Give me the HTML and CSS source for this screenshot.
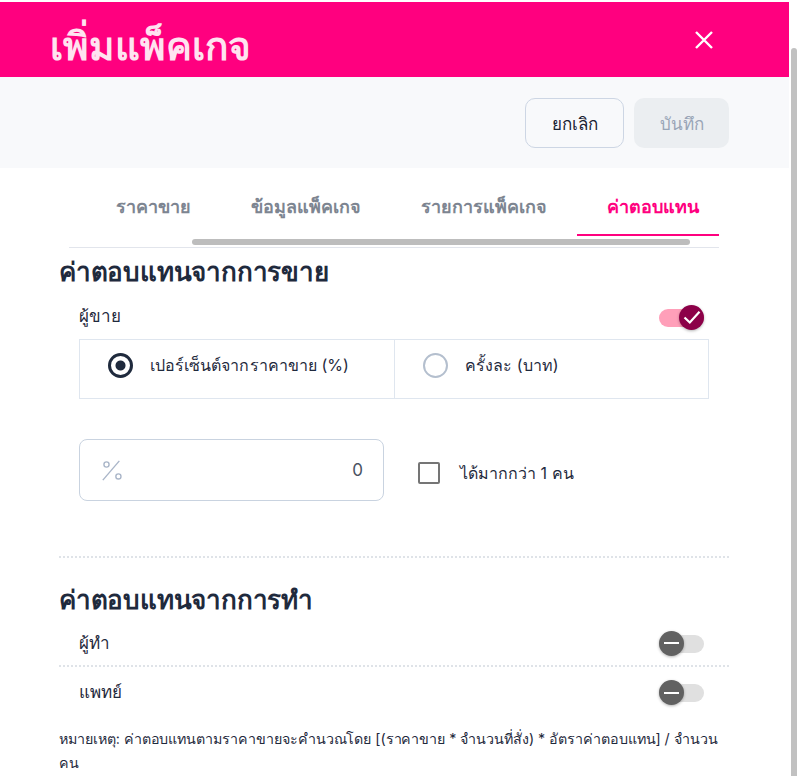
FILE: index.html
```html
<!DOCTYPE html>
<html lang="th">

<head>
    <meta charset="UTF-8">
    <meta name="viewport" content="width=device-width, initial-scale=1.0">
    <title>เพิ่มแพ็คเกจ</title>
    <link rel="stylesheet" href="styles.css">
</head>

<body>
    <div class="panel">
        <header class="panel-header">
            <h1 class="panel-title">เพิ่มแพ็คเกจ</h1>
            <svg class="close-icon" width="20" height="20" viewBox="0 0 20 20" aria-label="close">
                <path d="M2 2 L18 18 M18 2 L2 18" stroke="#fff" stroke-width="2.4" fill="none"/>
            </svg>
        </header>

        <div class="action-bar">
            <button class="btn btn-cancel">ยกเลิก</button>
            <button class="btn btn-save">บันทึก</button>
        </div>

        <nav class="tabs">
            <a class="tab">ราคาขาย</a>
            <a class="tab">ข้อมูลแพ็คเกจ</a>
            <a class="tab">รายการแพ็คเกจ</a>
            <a class="tab active">ค่าตอบแทน</a>
            <span class="tabs-scroll"></span>
        </nav>

        <section class="section section-sale">
            <h2 class="section-title">ค่าตอบแทนจากการขาย</h2>
            <div class="row row-seller">
                <span class="row-label">ผู้ขาย</span>
                <span class="toggle on">
                    <span class="knob">
                        <svg width="18" height="18" viewBox="0 0 18 18">
                            <path d="M1.5 9.5 L6.8 14.5 L16.5 3.8" stroke="#fff" stroke-width="2.2" fill="none"/>
                        </svg>
                    </span>
                </span>
            </div>

            <div class="choice">
                <label class="choice-item first"><span class="radio checked"></span>เปอร์เซ็นต์จากราคาขาย (%)</label>
                <label class="choice-item"><span class="radio"></span>ครั้งละ (บาท)</label>
            </div>

            <div class="amount-row">
                <div class="amount-input">
                    <svg width="22" height="22" viewBox="0 0 24 24">
                        <circle cx="6" cy="6" r="2.8" stroke="#a9b5c8" stroke-width="1.5" fill="none"/>
                        <circle cx="19" cy="19" r="2.8" stroke="#a9b5c8" stroke-width="1.5" fill="none"/>
                        <path d="M20 2 L2 23" stroke="#a9b5c8" stroke-width="1.5"/>
                    </svg>
                    <span class="amount-value">0</span>
                </div>
                <label class="check"><span class="check-box"></span>ได้มากกว่า 1 คน</label>
            </div>
        </section>

        <section class="section section-work">
            <h2 class="section-title">ค่าตอบแทนจากการทำ</h2>
            <div class="row row-doer">
                <span class="row-label">ผู้ทำ</span>
                <span class="toggle"><span class="knob"><i class="minus"></i></span></span>
            </div>
            <div class="row row-doctor">
                <span class="row-label">แพทย์</span>
                <span class="toggle"><span class="knob"><i class="minus"></i></span></span>
            </div>
            <p class="note">หมายเหตุ: ค่าตอบแทนตามราคาขายจะคำนวณโดย [(ราคาขาย * จำนวนที่สั่ง) * อัตราค่าตอบแทน] / จำนวน คน</p>
        </section>
    </div>
    <div class="page-scroll"></div>
</body>

</html>
```

FILE: styles.css
```css
* {
    box-sizing: border-box;
}

html, body {
    height: 100%;
}

body {
    margin: 0;
    overflow: hidden;
    background: #fff;
    color: #1f2a3d;
    font-family: "Inter", "Noto Sans", "DejaVu Sans", sans-serif;
}

.panel {
    width: 789px;
    padding-top: 2px;
}

.panel-header {
    height: 75px;
    background: #ff007f;
    display: flex;
    align-items: center;
    justify-content: space-between;
    padding: 0 75px 0 50px;
}

.panel-title {
    margin: 0;
    padding-top: 14px;
    font-size: 38.7px;
    font-weight: 600;
    color: #ffe3f0;
}

.close-icon {
    margin-bottom: -1px;
}

.action-bar {
    height: 91px;
    background: #f8f9fb;
    display: flex;
    justify-content: flex-end;
    align-items: flex-start;
    gap: 10px;
    padding: 21px 60px 0 0;
}

.btn {
    height: 50px;
    border-radius: 10px;
    font-family: inherit;
    font-size: 17px;
    font-weight: 500;
}

.btn-cancel {
    width: 99px;
    background: #f8f9fb;
    border: 1px solid #cdd6e4;
    color: #1a2233;
}

.btn-save {
    width: 95px;
    background: #ebeef1;
    border: 0;
    color: #99a5b7;
}

.tabs {
    position: relative;
    margin: 0 70px 0 69px;
    height: 80px;
    border-bottom: 1px solid #e2e5ec;
    display: flex;
    justify-content: flex-end;
    padding-top: 15px;
}

.tab {
    height: 53px;
    padding: 9px 30px 0;
    font-size: 18px;
    font-weight: 600;
    color: #7d8591;
}

.tab.active {
    padding-right: 20px;
    color: #ff007f;
    border-bottom: 2px solid #ff007f;
}

.tabs-scroll {
    position: absolute;
    left: 123px;
    top: 71px;
    width: 498px;
    height: 6px;
    border-radius: 3px;
    background: #bdbdbd;
}

.section {
    margin: 0 60px 0 59px;
}

.section-sale {
    height: 310px;
    border-bottom: 2px dotted #dfe3e8;
}

.section-title {
    margin: 0;
    font-size: 26px;
    font-weight: 700;
    letter-spacing: -0.2px;
    color: #1f2a3d;
    line-height: 48px;
}

.row {
    display: flex;
    justify-content: space-between;
    align-items: center;
    padding: 0 25px 0 20px;
    font-size: 17px;
}

.row-label {
    margin-bottom: 5px;
}

.row-seller {
    height: 43px;
}

.row-doer {
    height: 43px;
    border-bottom: 2px dotted #dfe3e8;
}

.row-doctor {
    height: 54px;
}

.toggle {
    position: relative;
    width: 45px;
    height: 18px;
    border-radius: 9px;
    background: #e0e0e0;
}

.section-work .toggle {
    margin-bottom: 2px;
}

.toggle.on {
    background: #ff9fb9;
}

.knob {
    position: absolute;
    left: 0;
    top: -4px;
    width: 25px;
    height: 25px;
    border-radius: 50%;
    background: #616161;
    box-shadow: 0 1px 3px rgba(0, 0, 0, 0.3);
    display: flex;
    align-items: center;
    justify-content: center;
}

.toggle.on .knob {
    left: 20px;
    background: #8c0048;
}

.minus {
    width: 15px;
    height: 2px;
    background: #fff;
}

.choice {
    margin: 0 20px;
    display: flex;
    height: 60px;
    border: 1px solid #dfe6ef;
}

.choice-item {
    flex: 1;
    display: flex;
    align-items: center;
    font-size: 16px;
    letter-spacing: 0.05px;
    padding-bottom: 8px;
    padding-left: 28px;
    gap: 17px;
}

.choice-item.first {
    flex: 0 0 315px;
    border-right: 1px solid #dfe6ef;
}

.radio {
    width: 25px;
    height: 25px;
    border-radius: 50%;
    border: 2px solid #b4bfce;
}

.radio.checked {
    border: 3px solid #1f2a3d;
    background: radial-gradient(circle, #1f2a3d 0 4.5px, #fff 5.5px);
}

.amount-row {
    margin: 40px 0 0 20px;
    display: flex;
    align-items: center;
}

.amount-input {
    width: 305px;
    height: 62px;
    border: 1px solid #c9d3e0;
    border-radius: 8px;
    display: flex;
    align-items: center;
    justify-content: space-between;
    padding: 0 20px 0 21px;
    font-size: 17px;
    color: #4a5262;
}

.check {
    margin-left: 34px;
    padding-top: 6px;
    display: flex;
    align-items: center;
    gap: 20px;
    font-size: 16px;
}

.check-box {
    width: 22px;
    height: 22px;
    border: 2px solid #757575;
    border-radius: 2px;
}

.section-work {
    padding-top: 18px;
}

.note {
    margin: 6px 0 0;
    font-size: 14.27px;
    letter-spacing: -0.05px;
    line-height: 24px;
}

.page-scroll {
    position: absolute;
    left: 791px;
    top: 48px;
    bottom: 0;
    width: 6px;
    background: #c1c1c1;
    border-radius: 3px 3px 0 0;
}
```
